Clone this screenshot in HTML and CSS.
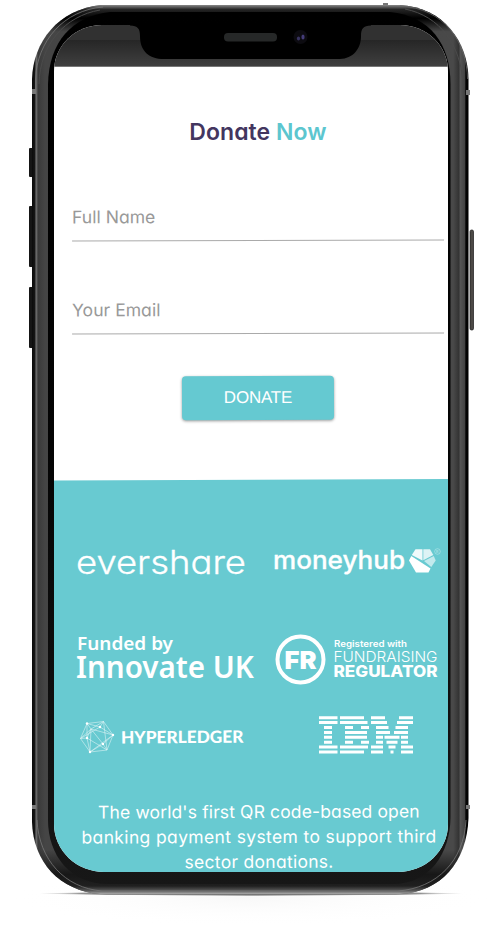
FILE: index.html
```html
<!DOCTYPE html>
<html lang="en">
<head>
<meta charset="utf-8">
<meta name="viewport" content="width=device-width, initial-scale=1">
<title>Donate Now</title>
<link rel="stylesheet" href="styles.css">
</head>
<body>
<div class="phone">
  <svg class="phone-frame" viewBox="0 0 502 929" aria-hidden="true">
    <defs>
      <linearGradient id="rim" x1="0" x2="1" y1="0" y2="0">
        <stop offset="0" stop-color="#0b0b0b"/><stop offset=".007" stop-color="#171717"/>
        <stop offset=".009" stop-color="#777"/><stop offset=".014" stop-color="#3a3a3a"/>
        <stop offset=".03" stop-color="#454545"/><stop offset=".965" stop-color="#494949"/>
        <stop offset=".978" stop-color="#333"/><stop offset=".981" stop-color="#555"/>
        <stop offset=".991" stop-color="#444"/><stop offset=".994" stop-color="#050505"/><stop offset="1" stop-color="#000"/>
      </linearGradient>
      <linearGradient id="ends" x1="0" x2="0" y1="5" y2="894" gradientUnits="userSpaceOnUse">
        <stop offset="0" stop-color="#888"/><stop offset=".005" stop-color="#252525"/><stop offset=".015" stop-color="#000"/>
        <stop offset=".03" stop-color="#000" stop-opacity="0"/><stop offset=".95" stop-color="#171717" stop-opacity="0"/>
        <stop offset=".978" stop-color="#171717"/><stop offset=".991" stop-color="#202020"/><stop offset=".996" stop-color="#555"/><stop offset="1" stop-color="#aaa"/>
      </linearGradient>
      <linearGradient id="bezel" x1="0" x2="0" y1="0" y2="1">
        <stop offset="0" stop-color="#000"/><stop offset=".5" stop-color="#040404"/><stop offset="1" stop-color="#171717"/>
      </linearGradient>
      <radialGradient id="ground"><stop offset="0" stop-color="#555"/><stop offset=".8" stop-color="#777" stop-opacity=".8"/><stop offset="1" stop-color="#bbb" stop-opacity="0"/></radialGradient>
      <radialGradient id="haze"><stop offset="0" stop-color="#f8f8f8"/><stop offset="1" stop-color="#fff" stop-opacity="0"/></radialGradient>
    </defs>
    <ellipse cx="251" cy="898" rx="245" ry="28" fill="url(#haze)"/>
    <ellipse cx="251" cy="893.500" rx="212" ry="2.400" fill="url(#ground)"/>
    <g fill="#151515">
      <rect x="29" y="148" width="4" height="29" rx="1"/><rect x="29" y="206" width="4" height="61" rx="1"/><rect x="29" y="287" width="4" height="61" rx="1"/>
    </g>
    <rect x="470" y="230" width="3.500" height="100" rx="1.500" fill="#4c4946" stroke="#181818" stroke-width=".7"/>
    <rect x="383" y="3" width="5" height="4" fill="#777"/>
    <path d="M102 5H399C444 7 468 42 468.500 79V818C467 862 441 892 400 894H100C60 891 33 862 32 822V79C33 42 58 9 102 5Z" fill="url(#rim)"/>
    <path d="M102 5H399C444 7 468 42 468.500 79V818C467 862 441 892 400 894H100C60 891 33 862 32 822V79C33 42 58 9 102 5Z" fill="url(#ends)"/>
    <path d="M35.500 90V79C37 41 64 10 103 7" fill="none" stroke="#777" stroke-width=".8"/>
    <path d="M39 84C40 44 65 16 100 10M463 84C461 45 440 16 405 9" fill="none" stroke="#4b4b4b" stroke-width="1"/>
    <path d="M467.500 79C467 42 444 8 400 6" fill="none" stroke="#666" stroke-width=".8"/>
    <path d="M37 820C39 860 65 888 102 891H398C437 888 464 861 466 820" fill="none" stroke="#777" stroke-width=".8"/>
    <path d="M110 12H390C430 16 450.500 44 450.500 84V818C450 853 430 884 393 884H108C70 884 48 855 48 820V84C49 42 72 16 110 12Z" fill="url(#bezel)"/>
    <path d="M32 89h4v5h-4zM466 90h4v5h-4zM32 805h4v4h-4zM466 805h4v4h-4z" fill="#777"/>
  </svg>

  <main class="screen">
    <div class="status"></div>
    <form class="form">
      <h1 class="title">Donate <span>Now</span></h1>
      <label class="field field-name">Full Name</label>
      <label class="field field-email">Your Email</label>
      <button class="donate" type="button">DONATE</button>
    </form>
    <section class="partners">
      <div class="logos">
        <svg viewBox="70 530 194 80">
          <text class="evershare" x="76" y="574" textLength="170" lengthAdjust="spacingAndGlyphs">evershare</text>
        </svg>
        <svg viewBox="264 530 183 80">
          <text class="moneyhub" x="273" y="569" textLength="132" lengthAdjust="spacingAndGlyphs">moneyhub</text>
          <path d="M409 560.500L411.300 556L430.500 568.500L428.500 572.500H416Z" fill="#fff"/>
          <path d="M411.800 555L415.500 549.300H422.500V560.500Z" fill="#fff" opacity=".9"/>
          <path d="M423.300 549.300H430L433.300 555L423.300 560.300Z" fill="#fff" opacity=".78"/>
          <path d="M424 561L433.800 556L435.700 560.500L431.300 567Z" fill="#fff" opacity=".6"/>
          <circle cx="437.500" cy="551.500" r="2.800" fill="none" stroke="#fff" stroke-width=".6" opacity=".5"/>
          <text class="mark" x="436.100" y="553.200">R</text>
        </svg>
        <svg viewBox="70 610 194 90">
          <text class="funded" x="77" y="649.500" textLength="96" lengthAdjust="spacingAndGlyphs">Funded by</text>
          <text class="innovate" x="76" y="678" textLength="178" lengthAdjust="spacingAndGlyphs">Innovate UK</text>
        </svg>
        <svg viewBox="264 610 183 90">
          <circle cx="300.500" cy="659.500" r="23" fill="none" stroke="#fff" stroke-width="4"/>
          <text class="fr" x="284.500" y="669" textLength="32" lengthAdjust="spacingAndGlyphs">FR</text>
          <text class="registered" x="334" y="646.500" textLength="73" lengthAdjust="spacingAndGlyphs">Registered with</text>
          <text class="fundraising" x="333.500" y="662" textLength="104" lengthAdjust="spacingAndGlyphs">FUNDRAISING</text>
          <text class="regulator" x="333.500" y="677" textLength="104" lengthAdjust="spacingAndGlyphs">REGULATOR</text>
        </svg>
        <svg viewBox="70 700 194 75">
          <g fill="none" stroke="#fff" stroke-width=".55" opacity=".85">
            <path d="M87 723.500L103.500 721.500L113 735L107 750L90 752L80.500 738.500Z"/>
            <path d="M87 723.500L100 727L113 735L91 729L87 738L80.500 738.500L91 729L103.500 721.500L107 750L87 738L90 752L103 744L113 735M87 723.500L91 729L90 752L113 735M91 729L103 744L107 750M100 727L103.500 721.500M100 727L80.500 738.500M87 723.500L87 738"/>
          </g>
          <g fill="#fff"><circle cx="87" cy="723.500" r="1.200"/><circle cx="100" cy="727" r="1.200"/><circle cx="113" cy="735" r="1.200"/><circle cx="87" cy="738" r="1.200"/><circle cx="103" cy="744" r="1.200"/><circle cx="90" cy="752" r="1.200"/></g>
          <text class="hyperledger" x="121" y="743.500" textLength="122.500" lengthAdjust="spacingAndGlyphs" transform="rotate(-.4 121 743)">HYPERLEDGER</text>
        </svg>
        <svg viewBox="264 700 183 75" role="img" aria-label="IBM">
          <path class="bars" d="M319 717.700H337.500M340 717.700H364M371 717.700H385M399 717.700H413
            M319 722.600H337.500M340 722.600H367.500M371 722.600H387M397 722.600H413
            M324 727.500H332M345 727.500H353M361 727.500H369M376 727.500H388.500M395.500 727.500H408
            M324 732.400H332M345 732.400H367M376 732.400H390M394 732.400H408
            M324 737.300H332M345 737.300H367M376 737.300H383M384.500 737.300H399.500M401 737.300H408
            M324 742.200H332M345 742.200H353M361 742.200H369M376 742.200H383M386.500 742.200H397.500M401 742.200H408
            M319 747.100H337.500M340 747.100H368M371 747.100H383M388.500 747.100H395.500M401 747.100H413
            M319 752H337.500M340 752H364M371 752H383M390.500 752H393.500M401 752H413"/>
        </svg>
      </div>
      <p class="tagline"><span class="l1">The world's first QR code-based open</span> <span class="l2">banking payment system to support third</span> <span class="l3">sector donations.</span></p>
    </section>
  </main>

  <svg class="notch" viewBox="130 24 242 36" aria-hidden="true">
    <path d="M130 24V25.500C138 25.500 140 29 140 36C140 51 149 59 164 59H340C353 58.500 361 49 361 36C361 29 363 25.500 371 25.500V24Z"/>
    <rect x="224" y="33" width="53" height="8.500" rx="4" fill="#262828"/>
    <circle cx="300.500" cy="37" r="7" fill="#0c0b10"/>
    <ellipse cx="298.500" cy="38.500" rx="1.600" ry="2" fill="#38335f"/><ellipse cx="303" cy="37" rx="1.600" ry="2.500" fill="#443c78"/>
  </svg>
</div>
</body>
</html>
```
FILE: styles.css
```css
* { box-sizing: border-box; }
body { margin: 0; background: #fff; font-family: Inter, "Open Sans", sans-serif; font-feature-settings: "cv11", "ss03"; }
.phone { position: relative; width: 502px; height: 929px; padding: 25px 54px 57px; overflow: hidden; }
.phone-frame { position: absolute; left: 0; top: 0; width: 502px; height: 929px; }
.screen {
  position: relative; display: flex; flex-direction: column;
  width: 394px; height: 847px; overflow: hidden; background: #fff;
  border-radius: 48px 48px 50px 50px / 46px 46px 48px 48px;
}
.status {
  flex: none; height: 42px; border-bottom: 1px solid #777;
  background: linear-gradient(#313131 0 15px, #262626 15px, #3f3f3f 41px);
}
.form { flex: none; display: flex; flex-direction: column; height: 412px; padding: 50px 4px 0 18px; }
.title { margin: 0; width: 372px; height: 30px; text-align: center; font-size: 23px; line-height: 30px; font-weight: 600; letter-spacing: .05px; color: #43365f; }
.title span { color: #5cc6cf; }
.field { height: 45px; border-bottom: 1.500px solid #aaa; color: #999; font-size: 17.600px; line-height: 41px; transform: rotate(-.12deg); }
.field-name { margin-top: 49px; }
.field-email { margin-top: 48px; }
.donate {
  width: 152px; height: 44px; margin: 42px 0 0 110px; padding: 0; border: 0; border-radius: 4px;
  background: #65c9d1; color: #fff; box-shadow: 0 1px 3px #0006;
  font: 17px/44px "Liberation Sans", Arial, sans-serif; letter-spacing: -.2px; transform: rotate(-.2deg);
}
.partners { flex: 1; padding: 51px 0 0 16px; background: #68cad1; clip-path: polygon(0 1.500px, 100% 0, 100% 100%, 0 100%); }
.logos { display: grid; grid-template-columns: 194px 183px; grid-template-rows: 80px 90px 75px; }
.logos svg { display: block; width: 100%; height: 100%; fill: #fff; }
.evershare { font-weight: 300; font-size: 33px; stroke: #fff; stroke-width: .3px; }
.moneyhub { font-weight: 500; font-size: 25px; stroke: #fff; stroke-width: .3px; }
.mark { font-size: 3.500px; opacity: .6; }
.funded { font: 600 18.500px "Noto Sans", sans-serif; }
.innovate { font: 600 30px "Noto Sans", sans-serif; }
.fr { font-weight: 900; font-size: 25px; }
.registered { font-weight: 600; font-size: 9px; }
.fundraising { font-weight: 300; font-size: 15px; }
.regulator { font-weight: 800; font-size: 15.500px; }
.hyperledger { font: 900 17px Lato, sans-serif; }
.bars { stroke: #fff; stroke-width: 3; }
.tagline { margin: 24px 0 0 3px; width: 372px; color: #fff; text-align: center; font-size: 17.500px; line-height: 25px; transform: rotate(-.2deg); }
.tagline span { display: block; white-space: nowrap; }
.l1 { letter-spacing: .13px; }
.l2 { letter-spacing: .36px; }
.l3 { letter-spacing: .28px; }
.notch { position: absolute; left: 130px; top: 24px; width: 242px; height: 36px; }
```
